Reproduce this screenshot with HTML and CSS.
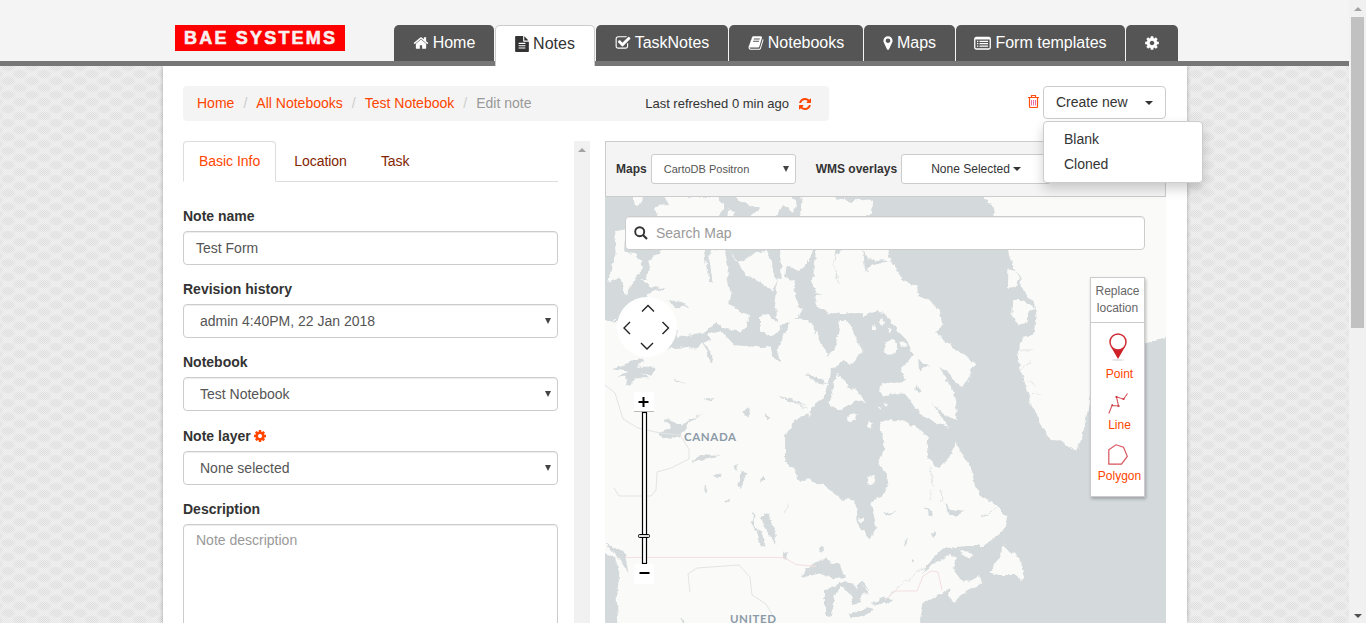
FILE: index.html
```html
<!DOCTYPE html>
<html lang="en">
<head>
<meta charset="utf-8">
<title>Edit note</title>
<link rel="stylesheet" href="styles.css">
</head>
<body>
<svg class="defs" width="0" height="0" aria-hidden="true">
  <symbol id="cog" viewBox="0 0 1792 1792"><path d="M1152 896q0-106-75-181t-181-75-181 75-75 181 75 181 181 75 181-75 75-181zm512-109v222q0 12-8 23t-20 13l-185 28q-19 54-39 91 35 50 107 138 10 12 10 25t-9 23q-27 37-99 108t-94 71q-12 0-26-9l-138-108q-44 23-91 38-16 136-29 186-7 28-36 28h-222q-14 0-24.500-8.500t-11.500-21.500l-28-184q-49-16-90-37l-141 107q-10 9-25 9-14 0-25-11-126-114-165-168-7-10-7-23 0-12 8-23 15-21 51-66.500t54-70.500q-27-50-41-99l-183-27q-13-2-21-12.500t-8-23.500v-222q0-12 8-23t19-13l186-28q14-46 39-92-40-57-107-138-10-12-10-24 0-10 9-23 26-36 98.500-107.500t94.500-71.500q13 0 26 10l138 107q44-23 91-38 16-136 29-186 7-28 36-28h222q14 0 24.500 8.500t11.500 21.500l28 184q49 16 90 37l142-107q9-9 24-9 13 0 25 10 129 119 165 170 7 8 7 22 0 12-8 23-15 21-51 66.500t-54 70.500q26 50 41 98l183 28q13 2 21 12.500t8 23.500z"/></symbol>
</svg>
<div class="page">
  <header class="top">
    <div class="logo">BAE SYSTEMS</div>
    <nav class="nav">
      <a class="tab w-home"><svg class="fa" viewBox="0 0 1792 1792"><path d="M1472 992v480q0 26-19 45t-45 19h-384v-384h-256v384h-384q-26 0-45-19t-19-45v-480q0-1 .5-3t.5-3l575-474 575 474q1 2 1 6zm223-69l-62 74q-8 9-21 11h-3q-13 0-21-7l-692-577-692 577q-12 8-24 7-13-2-21-11l-62-74q-8-10-7-23.500t11-21.500l719-599q32-26 76-26t76 26l244 204v-195q0-14 9-23t23-9h192q14 0 23 9t9 23v408l219 182q10 8 11 21.500t-7 23.500z"/></svg>Home</a>
      <a class="tab w-notes active"><svg class="fa file" viewBox="128 0 1536 1792"><path d="M1596 476q14 14 28 36h-472v-472q22 14 36 28zm-476 164h544v1056q0 40-28 68t-68 28h-1344q-40 0-68-28t-28-68v-1600q0-40 28-68t68-28h800v544q0 40 28 68t68 28zm160 736v-64q0-14-9-23t-23-9h-704q-14 0-23 9t-9 23v64q0 14 9 23t23 9h704q14 0 23-9t9-23zm0-256v-64q0-14-9-23t-23-9h-704q-14 0-23 9t-9 23v64q0 14 9 23t23 9h704q14 0 23-9t9-23zm0-256v-64q0-14-9-23t-23-9h-704q-14 0-23 9t-9 23v64q0 14 9 23t23 9h704q14 0 23-9t9-23z"/></svg>Notes</a>
      <a class="tab w-task"><svg class="fa" viewBox="0 0 1792 1792"><path d="M1472 930v318q0 119-84.500 203.500t-203.500 84.500h-832q-119 0-203.500-84.500t-84.500-203.500v-832q0-119 84.500-203.500t203.500-84.500h832q63 0 117 25 15 7 18 23 3 17-9 29l-49 49q-10 10-23 10-3 0-9-2-23-6-45-6h-832q-66 0-113 47t-47 113v832q0 66 47 113t113 47h832q66 0 113-47t47-113v-254q0-13 9-22l64-64q10-10 23-10 6 0 12 3 20 8 20 29zm231-489l-814 814q-24 24-57 24t-57-24l-430-430q-24-24-24-57t24-57l110-110q24-24 57-24t57 24l263 263 647-647q24-24 57-24t57 24l110 110q24 24 24 57t-24 57z"/></svg>TaskNotes</a>
      <a class="tab w-books"><svg class="fa" viewBox="0 0 1792 1792"><path d="M1703 478q40 57 18 129l-275 906q-19 64-76.500 107.500t-122.500 43.500h-923q-77 0-148.500-53.500t-99.500-131.500q-24-67-2-127 0-4 3-27t4-37q1-8-3-21.500t-3-19.500q2-11 8-21t16.500-23.500 16.500-23.500q23-38 45-91.500t30-91.500q3-10 .5-30t-.5-28q3-11 17-28t17-23q21-36 42-92t25-90q1-9-2.500-32t.5-28q4-13 22-30.500t22-22.500q19-26 42.500-84.500t27.500-96.500q1-8-3-25.500t-2-26.500q2-8 9-18t18-23 17-21q8-12 16.500-30.500t15-35 16-36 19.500-32 26.500-23.500 36-11.500 47.500 5.500l-1 3q38-9 51-9h761q74 0 114 56t18 130l-274 906q-36 119-71.500 153.500t-128.500 34.500h-869q-27 0-38 15-11 16-1 43 24 70 144 70h923q29 0 56-15.500t35-41.500l300-987q7-22 5-57 38 15 59 43zm-1064 2q-4 13 2 22.500t20 9.500h608q13 0 25.500-9.500t16.500-22.500l21-64q4-13-2-22.500t-20-9.500h-608q-13 0-25.500 9.500t-16.500 22.500zm-83 256q-4 13 2 22.500t20 9.500h608q13 0 25.500-9.500t16.500-22.500l21-64q4-13-2-22.500t-20-9.500h-608q-13 0-25.500 9.500t-16.500 22.500z"/></svg>Notebooks</a>
      <a class="tab w-maps"><svg class="fa pin" viewBox="384 0 1024 1792"><path d="M1152 640q0-106-75-181t-181-75-181 75-75 181 75 181 181 75 181-75 75-181zm256 0q0 109-33 179l-364 774q-16 33-47.500 52t-67.500 19-67.500-19-46.500-52l-365-774q-33-70-33-179 0-212 150-362t362-150 362 150 150 362z"/></svg>Maps</a>
      <a class="tab w-form"><svg class="fa list" viewBox="0 0 17 16"><rect x=".75" y="2.500" width="15.500" height="11.500" rx="1.500" fill="none" stroke="#fff" stroke-width="1.300"/><path d="M1 2.500h15v2H1zM3 5.700h1.300v1.200H3zm2.500 0H14v1.200H5.500zM3 8.100h1.300v1.200H3zm2.500 0H14v1.200H5.500zM3 10.500h1.300v1.200H3zm2.500 0H14v1.200H5.500z"/></svg>Form templates</a>
      <a class="tab w-cog"><svg class="fa cog"><use href="#cog"/></svg></a>
    </nav>
  </header>
  <main class="sheet">
    <div class="head-row">
      <div class="crumbs">
        <a>Home</a><i>/</i><a>All Notebooks</a><i>/</i><a>Test Notebook</a><i>/</i><span class="current">Edit note</span>
        <span class="fresh">Last refreshed 0 min ago</span>
        <svg class="refresh" viewBox="0 0 1792 1792"><path d="M1639 1056q0 5-1 7-64 268-268 434.500t-478 166.500q-146 0-282.500-55t-243.500-157l-129 129q-19 19-45 19t-45-19-19-45v-448q0-26 19-45t45-19h448q26 0 45 19t19 45-19 45l-137 137q71 66 161 102t187 36q134 0 250-65t186-179q11-17 53-117 8-23 30-23h192q13 0 22.500 9.500t9.500 22.500zm25-800v448q0 26-19 45t-45 19h-448q-26 0-45-19t-19-45 19-45l138-138q-148-137-349-137-134 0-250 65t-186 179q-11 17-53 117-8 23-30 23h-199q-13 0-22.500-9.500t-9.500-22.500v-7q65-268 270-434.500t480-166.500q146 0 284 55.500t245 156.500l130-129q19-19 45-19t45 19 19 45z"/></svg>
      </div>
      <div class="actions">
        <svg class="trash" viewBox="0 0 11 13"><path d="M0 2.500h11M3.500 2.500V.5h4v2M1.500 3v8.500q0 1 1 1h6q1 0 1-1V3" fill="none" stroke="#ff4e10" stroke-width="1.200"/><path d="M3.500 5v5.500M5.500 5v5.500M7.500 5v5.500" stroke="#ee6fa8" stroke-width="1"/></svg>
        <div class="create">Create new<b class="caret"></b>
          <div class="menu"><a>Blank</a><a>Cloned</a></div>
        </div>
      </div>
    </div>
    <div class="columns">
      <section class="form">
        <div class="tabs"><a class="on">Basic Info</a><a>Location</a><a>Task</a></div>
        <div class="group"><label>Note name</label><div class="field">Test Form</div></div>
        <div class="group"><label>Revision history</label><div class="field select">admin 4:40PM, 22 Jan 2018<b class="tri"></b></div></div>
        <div class="group"><label>Notebook</label><div class="field select">Test Notebook<b class="tri"></b></div></div>
        <div class="group"><label>Note layer <svg class="mini"><use href="#cog"/></svg></label><div class="field select">None selected<b class="tri"></b></div></div>
        <div class="group"><label>Description</label><div class="field area">Note description</div></div>
      </section>
      <div class="inner-scroll"><b class="up"></b></div>
      <section class="mapcol">
        <div class="mapbar">
          <strong>Maps</strong><div class="pick">CartoDB Positron<b class="tri"></b></div>
          <strong class="wms">WMS overlays</strong><div class="overlay-pick">None Selected<b class="caret"></b></div>
        </div>
        <div class="map">
          <svg class="world" viewBox="605 197 561 426">
            <defs><filter id="coast" x="0" y="0" width="100%" height="100%"><feTurbulence type="fractalNoise" baseFrequency=".15" numOctaves="3" seed="4"/><feDisplacementMap in="SourceGraphic" scale="5.500" xChannelSelector="R" yChannelSelector="G"/></filter></defs>
            <rect x="605" y="197" width="561" height="426" fill="#d4dadc"/>
            <g filter="url(#coast)">
              <rect x="590" y="180" width="590" height="450" fill="#d4dadc"/>
              <!-- Greenland, Baffin Island and the east coast -->
              <g transform="translate(780 190) scale(.33333)" fill="#fafaf8">
                <path d="M605-20H1200V430L1158 440 1095 460 1000 540 930 615 920 680 905 740 892 782 862 768 845 752 812 750 790 715 775 690 752 640 740 590 722 540 714 500 720 462 765 425 770 380 762 340 740 312 722 290 722 260 700 230 690 200 688 180 665 120 645 78 636 45 612 20z"/>
                <path d="M685 235l22 5 12 25-10 25-25 3zM700 330l25 0 42 25-20 8-5 35-25 5-20-25zM725 440l30-5-8 25 20 5-20 15-25-3z"/>
                <path d="M183 175H320L332 212 350 235 365 270 410 290 415 315 450 330 478 360 490 405 465 425 495 455 530 480 560 500 585 520 568 560 545 592 520 570 505 545 478 530 495 565 520 600 530 640 528 690 490 670 455 640 505 710 460 697 420 670 395 640 375 612 345 608 310 620 298 600 305 575 340 582 378 570 362 545 398 495 385 455 355 425 330 390 290 345 285 365 245 380 190 370 150 365 110 340 106 315 150 318 185 300 172 260 172 210z"/>
                <path d="M112 175H168L155 230 160 280 182 302 150 308 105 300 98 265z"/>
                <path d="M-10 265L25 270 48 310 45 345 68 360 50 385 20 400-10 410z"/>
                <path d="M318 460q12-18 30-10 8 22-5 40-20 10-30-5zM358 458h22v12h-18zM175 550L205 590 230 600 255 640 225 630 205 645 175 662 145 640z"/>
                <path d="M205 680q15-15 28-8-5 20-25 27-10-5-3-19M265 692l13 5-5 20-10-8zM290 650l14 2-2 10zM310 640l14 3-6 8zM275 410l12-5 3 20-10-5zM300 390l10-5 5 15-10 10zM320 410l14 5-8 12z"/>
                <path d="M-40 470L-10 480 40 390 85 390 95 450 115 405 128 425 132 470 146 498 172 460 180 382 212 378 240 395 230 430 245 490 210 525 192 510 150 540 145 580 130 625 85 660 50 690 25 740 15 810 42 820 52 870 85 868 130 885 180 925 226 932 230 1000 268 1045 290 1015 274 942 312 910 325 882 320 850 292 820 310 780 308 740 297 692 370 690 410 715 445 742 440 800 475 835 500 815 515 790 528 760 550 800 575 840 585 890 600 915 650 945 680 985 678 1010 655 1035 610 1068 560 1068 490 1075 450 1110 425 1150 470 1115 510 1095 532 1103 520 1130 540 1170 575 1172 600 1155 605 1180 560 1205 520 1235 503 1222 510 1190 480 1215 430 1240 420 1290 430 1330H-600V500z"/>
                <path d="M680 1035l-10 30 10 10 20 15 18 15 5 20 10 35-10 10-20-15-50 0-25-8 25-35 15-40z"/>
                <path d="M530 1078l45 10 5 10-20 2z"/>
              </g>
              <!-- western Arctic archipelago -->
              <g transform="translate(600 80) scale(.33333)" fill="#fafaf8">
                <path d="M100 345l30 2-5 25-20 5zM190 350H350L370 380 350 430 210 430 170 405 165 378 210 375zM385 385l20 10-3 20-20-5zM390 330H560L590 370 580 400 550 375 520 420H440L480 385 415 365zM605 340H700L710 360 730 355 750 368 780 355 820 365 815 400 740 430H600z"/>
                <path d="M45 450L80 445 75 515 110 520 130 560 75 650 60 590 25 605 35 560 50 520z"/>
                <path d="M140 600L150 540 200 505 310 500 325 600 335 610 325 530 340 505 375 515 385 560 380 600 395 635 388 670 420 695 450 705 442 740 420 755 370 745 350 725 320 755 235 770 220 720 150 700 140 640 195 625 150 620 120 600z"/>
                <path d="M385 510L415 550 470 520 500 510 530 600 520 635 500 620 470 600 430 580 415 545z"/>
                <path d="M540 500L640 505 620 550 600 570 560 560 550 620 555 590 580 605 585 640 600 690 575 720 550 710 525 680 530 640 545 600z"/>
                <path d="M650 505L710 510 700 560 720 625 700 650 650 640 635 600 660 540z"/>
                <path d="M710 525L840 500 870 540 875 700 760 690 695 705 650 680 650 645 700 640 720 600 700 560z"/>
                <path d="M480 710l25-5 40 40-30 25-35-20zM320 765l40-15 10 15-35 25z"/>
              </g>
              <!-- western mainland -->
              <g transform="translate(600 270) scale(.33333)" fill="#fafaf8">
                <path d="M-30 160L50 150 120 240 215 234 290 232 320 215 350 205 370 192 400 225 480 232 510 240 545 285 550 200 575 150 600 145 640 165 650 240 620 550-30 600z"/>
              </g>
              <!-- lakes and straits -->
              <g transform="translate(600 270) scale(.33333)" fill="#d4dadc">
                <path d="M35 298L120 265 130 275 110 290 165 290 155 320 120 310 150 325 110 325 90 350 75 345 80 320 55 322 85 305zM175 490L215 475 190 445 240 465 310 430 265 462 235 500 190 505zM430 425l15-15 5 20-10 8zM305 385l40 0-15 8zM535 378l40 10 50 20-60-15zM615 312l35 5 30 25-30-5zM495 430l15 10-8 8zM220 325l40 20-30-10zM305 205l35 55-5 25-15-40zM500 200l40 60 0 15-20-15zM200 95l45 0 20 15-35 2z"/>
                <path d="M640 165L670 160 690 185 680 250 660 220 650 185zM690 130L790 130 775 215 740 150 715 150 690 250 675 230z"/>
                <path d="M625 430L580 455 555 500 555 575 585 600 600 630 640 625 700 650z"/>
              </g>
              <g transform="translate(600 440) scale(.33333)" fill="#d4dadc">
                <path d="M275 70L300 42 360 45 320 55 290 65zM340 112l20-12-5 15zM400 80l15-5-5 20zM425 90l15 10-15 40-12 0 8-20zM475 130l20-25 0 15zM315 130l10 25-12 5zM455 215l12 10-5 30 20 20 15 45-15-5-10-35-20-35 10-5zM490 220L505 225 520 260 528 290 525 315 515 290 480 240zM550 335l15 5-5 20-12-5zM655 320l14 2-2 18-12-8zM550 220l20-30-10 20zM370 185l18-8-5 12z"/>
                <path d="M-10 330L45 350 58 400 50 470 55 560H-10zM15 310L75 340 85 400 60 360zM600 408L630 378 680 352 695 368 720 370 735 410 700 415 665 400 620 410zM675 450L730 425 725 435 705 460 700 500 690 530 675 520zM720 425L760 430 765 445 780 430 810 465 785 455 780 490 760 495 750 460 720 435zM750 520L800 505 825 510 785 530 755 532zM812 490L860 470 880 480 860 492zM240 530l30 35-20-5z"/>
              </g>
              <g transform="translate(780 190) scale(.33333)" fill="#d4dadc">
                <path d="M415 505l12 15 20 5-20 12-10 8zM405 580l20 20 2 10-20-5zM310 970l40-5-30 15zM495 935l15 25 45 5-25 12-25-5zM430 950l25 15 5 12-15-5zM370 1060l15-20-10 30zM452 1030l14 0-5 18zM395 1106l10 8-8 3zM250 178l14 30 65 5-60 15-12 18-4-30zM605 980l50-30-45 32zM275 1240l55-20-10 20zM250 1175l18 30-30-25z"/>
                <g fill="none" stroke="#d4dadc" stroke-width="2"><path d="M330 1215L380 1170 430 1135 490 1085M450 900v30M485 900v35M450 830l10 60M720 480l40 0M720 545l35-35M745 570l20 20M755 610l25 5M75 552l50 25 20 3M0 620l80 35"/></g>
              </g>
              <path d="M867 478l8-2-2 9-6-2zM858 520l6-3-2 6z" fill="#fafaf8"/>
            </g>
            <g fill="none" stroke="#e2e5e6"><path d="M605 385l10 8 8 26 15 9 22 5 20 2 9 14v10l-18 9-14 4-1 18-5 6H619l-5-8M690 592l-2-18 9-6 42-3 11 12 2 18 14 9 10 17"/></g>
            <g fill="none" stroke="#f5dfe0"><path d="M625 557.500h159l12 7 20 2M885 600l10-9h22l6-15 8-5 7 1 4 18"/></g>
            <g class="place"><text x="684" y="441" textLength="52">CANADA</text><text x="730" y="623" textLength="46">UNITED</text></g>
          </svg>
          <div class="search"><svg viewBox="0 0 14 14"><circle cx="5.700" cy="5.700" r="4.500" fill="none" stroke="#333" stroke-width="1.900"/><path d="M9 9l4 4" stroke="#333" stroke-width="2.200"/></svg>Search Map</div>
          <svg class="pan" viewBox="0 0 60 60"><circle cx="30" cy="30" r="30" fill="#fff"/><path d="M25 14.500l6-6 6 6M24 46l6 6 6-6M13 25l-6 6 6 6M45.500 25l6 6-6 6" fill="none" stroke="#222" stroke-width="1.400"/></svg>
          <svg class="zoom" viewBox="0 0 20 192"><rect width="20" height="20" rx="2" fill="#fff"/><path d="M0 19.500h20" stroke="#bbb"/><path d="M4.500 10h10M9.500 5v10" stroke="#000" stroke-width="2"/><rect x="8.500" y="20.500" width="4" height="151" fill="#fff" stroke="#000" stroke-width="1.200"/><rect x="4.500" y="142.500" width="11" height="3" rx="1" fill="#ddd" stroke="#000"/><rect y="172" width="20" height="20" rx="2" fill="#fff"/><path d="M5.500 181h10" stroke="#000" stroke-width="2"/></svg>
          <div class="tools">
            <div class="tools-title">Replace<br>location</div>
            <a><svg width="20" height="30" viewBox="0 0 20 30"><ellipse cx="10" cy="27" rx="6" ry="1" fill="#e5e5e5"/><path d="M2.500 13Q10 18 17.500 13L10 26z" fill="#cf2027"/><circle cx="10" cy="9" r="8" fill="#fff" stroke="#cf2b35" stroke-width="1.500"/></svg>Point</a>
            <a><svg width="20" height="21" viewBox="0 0 20 21"><path d="M.8 20.500L4 12.500 10.500 13 8.500 3.800 15.500 6.200 19.500.5" fill="none" stroke="#d45058" stroke-width="1.100"/><path d="M3.500 12h1.500M9.500 13h2M7.500 4h2M14.500 6h2" stroke="#c92b35" stroke-width="1.600"/></svg>Line</a>
            <a><svg width="20" height="21" viewBox="0 0 20 21"><path d="M.8 20.200V5.800L8 .8l7.500 2.500 3.800 9-5.800 7.900z" fill="none" stroke="#d8545c" stroke-width="1.200"/></svg>Polygon</a>
          </div>
        </div>
      </section>
    </div>
  </main>
</div>
<aside class="scroll"><b class="up"></b><div class="thumb"></div><b class="down"></b></aside>
</body>
</html>
```
FILE: styles.css
```css
* { box-sizing: border-box; }
body {
  margin: 0; width: 1366px; height: 623px; overflow: hidden; display: flex;
  font: 14px/20px "Liberation Sans", Arial, sans-serif; color: #333;
}
.defs { position: absolute; }
.page {
  width: 1349px; height: 623px; display: flex; flex-direction: column; align-items: center;
  background:
    repeating-conic-gradient(#eee 0 25%, transparent 0 50%) 0 0 / 2px 2px,
    radial-gradient(ellipse 8px 5px at 50% 50%, #dadada 0, #dedede 70%, transparent 100%) 20px 4px / 24px 14px,
    radial-gradient(ellipse 8px 5px at 50% 50%, #dadada 0, #dedede 70%, transparent 100%) 8px 11px / 24px 14px,
    #ebebeb;
}
.top {
  width: 100%; height: 66px; flex: none; background: #f4f4f4; border-bottom: 5px solid #777;
  display: flex; align-items: flex-start; padding: 25px 0 0 175px;
}
.logo {
  width: 170px; height: 26px; margin-right: 49px; background: #f00; color: #f8f0f0;
  font-size: 18px; font-weight: bold; line-height: 27px; letter-spacing: 2.200px;
  padding-left: 9px; white-space: nowrap; -webkit-text-stroke: .6px #f8f0f0;
}
.nav { display: flex; gap: 1px; }
.tab {
  height: 36px; background: #555; color: #fff; font-size: 16px; line-height: 20px;
  border-radius: 5px 5px 0 0; display: flex; justify-content: center; align-items: center; gap: 4px;
  padding-bottom: 1px; white-space: nowrap;
}
.tab.active { height: 41px; background: #fff; color: #333; border: 1px solid #ccc; border-bottom: 0; padding-bottom: 5px; }
.w-home { width: 100px; } .w-notes { width: 100px; } .w-task { width: 132px; } .w-books { width: 134px; }
.w-maps { width: 91px; } .w-form { width: 169px; } .w-cog { width: 52px; }
.fa { width: 16px; height: 16px; fill: currentColor; flex: none; }
.file { width: 14px; } .pin { width: 10px; } .list { width: 17px; } .fa.cog { width: 16px; }
.sheet {
  width: 1024px; flex: 1; min-height: 0; background: #fff; box-shadow: 0 0 4px rgba(0,0,0,.3);
  clip-path: inset(0 -40px 0 -5px); margin-left: 1px; padding: 20px 21px 0 20px; display: flex; flex-direction: column;
}
.head-row { display: flex; justify-content: space-between; height: 55px; flex: none; }
.crumbs { width: 646px; height: 35px; background: #f4f4f4; border-radius: 4px; display: flex; align-items: center; padding: 0 17px 2px 14px; }
.crumbs a { color: #ff4500; }
.crumbs i { color: #ccc; font-style: normal; width: 22px; text-align: center; }
.current { color: #999; }
.fresh { margin-left: auto; font-size: 13px; padding-top: 2px; white-space: nowrap; }
.refresh { width: 14px; height: 14px; margin: 3px 0 0 9px; fill: #ff4500; }
.actions { display: flex; gap: 4px; }
.trash { width: 11px; height: 13px; margin-top: 9px; }
.create { position: relative; width: 123px; height: 33px; border: 1px solid #ccc; border-radius: 4px; padding: 0 12px; line-height: 31px; display: flex; justify-content: space-between; align-items: center; background: #fff; }
.caret { border: 4px solid transparent; border-top-color: #333; border-bottom: 0; }
.menu { position: absolute; z-index: 5; left: -1px; top: 34px; width: 160px; height: 62px; padding: 5px 0; background: #fff; border: 1px solid #ccc; border-radius: 4px; box-shadow: 0 6px 12px rgba(0,0,0,.18); }
.menu a { display: block; height: 25px; line-height: 25px; padding-left: 20px; }
.columns { display: flex; flex: 1; min-height: 0; }
.form { width: 375px; overflow: hidden; }
.tabs { height: 41px; border-bottom: 1px solid #ddd; display: flex; margin-bottom: 24px; }
.tabs a { height: 41px; padding: 10px 15px 0; border: 1px solid transparent; margin-right: 2px; color: #822400; line-height: 18px; letter-spacing: -.03px; }
.tabs .on { color: #ff4500; background: #fff; border-color: #ddd; border-bottom-color: #fff; border-radius: 4px 4px 0 0; }
.group { margin-bottom: 14.200px; }
.group label { display: flex; align-items: center; gap: 3px; height: 20px; margin-bottom: 5px; font-weight: bold; white-space: pre; }
.mini { width: 14px; height: 14px; fill: #ff4500; margin-left: -5px; }
.field { height: 34px; border: 1px solid #ccc; border-radius: 4px; box-shadow: inset 0 1px 1px rgba(0,0,0,.075); padding: 6px 12px; color: #555; display: flex; justify-content: space-between; align-items: center; }
.select { padding: 6px 6px 6px 16px; }
.tri { border: 3px solid transparent; border-top: 6px solid #444; border-bottom: 0; }
.area { height: 150px; color: #999; align-items: flex-start; padding-top: 5px; }
.inner-scroll { width: 16px; margin: 0 15px 0 16px; background: #f1f1f1; padding: 7px 4px; }
.up { display: block; border: 4px solid transparent; border-bottom-color: #a3a3a3; border-top: 0; }
.mapcol { width: 561px; display: flex; flex-direction: column; }
.mapbar { height: 56px; flex: none; border: 1px solid #ccc; background: #f4f4f4; display: flex; align-items: center; padding-left: 10px; font-size: 12px; white-space: nowrap; }
.wms { margin-left: 20px; }
.pick, .overlay-pick { height: 30px; margin-left: 4px; border: 1px solid #ccc; border-radius: 3px; background: #fff; display: flex; align-items: center; }
.pick { width: 145px; justify-content: space-between; padding: 0 6px 0 12px; font-size: 11px; color: #555; }
.overlay-pick { width: 150px; justify-content: center; gap: 3px; }
.map { position: relative; flex: 1; min-height: 0; overflow: hidden; }
.world { display: block; width: 561px; height: 426px; }
.place { fill: #8c9ba8; font: bold 11.500px Lato, "Open Sans", sans-serif; }
.search { position: absolute; left: 20px; top: 19px; width: 520px; height: 34px; border: 1px solid #ccc; border-radius: 4px; background: #fff; box-shadow: inset 0 1px 1px rgba(0,0,0,.075); color: #999; display: flex; align-items: center; gap: 8px; padding-left: 8px; }
.search svg { width: 14px; height: 14px; }
.pan { position: absolute; left: 12px; top: 100px; width: 60px; height: 60px; }
.zoom { position: absolute; left: 29px; top: 195px; width: 20px; height: 192px; }
.tools { position: absolute; left: 485px; top: 80px; width: 55px; height: 220px; border: 1px solid #ccc; background: #fff; box-shadow: 1px 2px 3px rgba(0,0,0,.25); font-size: 12px; line-height: 17px; text-align: center; color: #666; }
.tools-title { height: 45px; padding-top: 5px; border-bottom: 1px solid #ccc; }
.tools a { display: flex; flex-direction: column; align-items: center; height: 51px; color: #ff4500; justify-content: flex-end; padding-left: 4px; }
.tools a:nth-of-type(1) { height: 60px; }
.tools svg { margin: 0 4px 3px 0; }
.scroll { width: 17px; background: #f1f1f1; display: flex; flex-direction: column; align-items: center; padding: 7px 0 5px; }
.thumb { width: 13px; height: 311px; margin-top: 6px; background: #c1c1c1; }
.down { margin-top: auto; border: 4px solid transparent; border-top-color: #505050; border-bottom: 0; }
```
